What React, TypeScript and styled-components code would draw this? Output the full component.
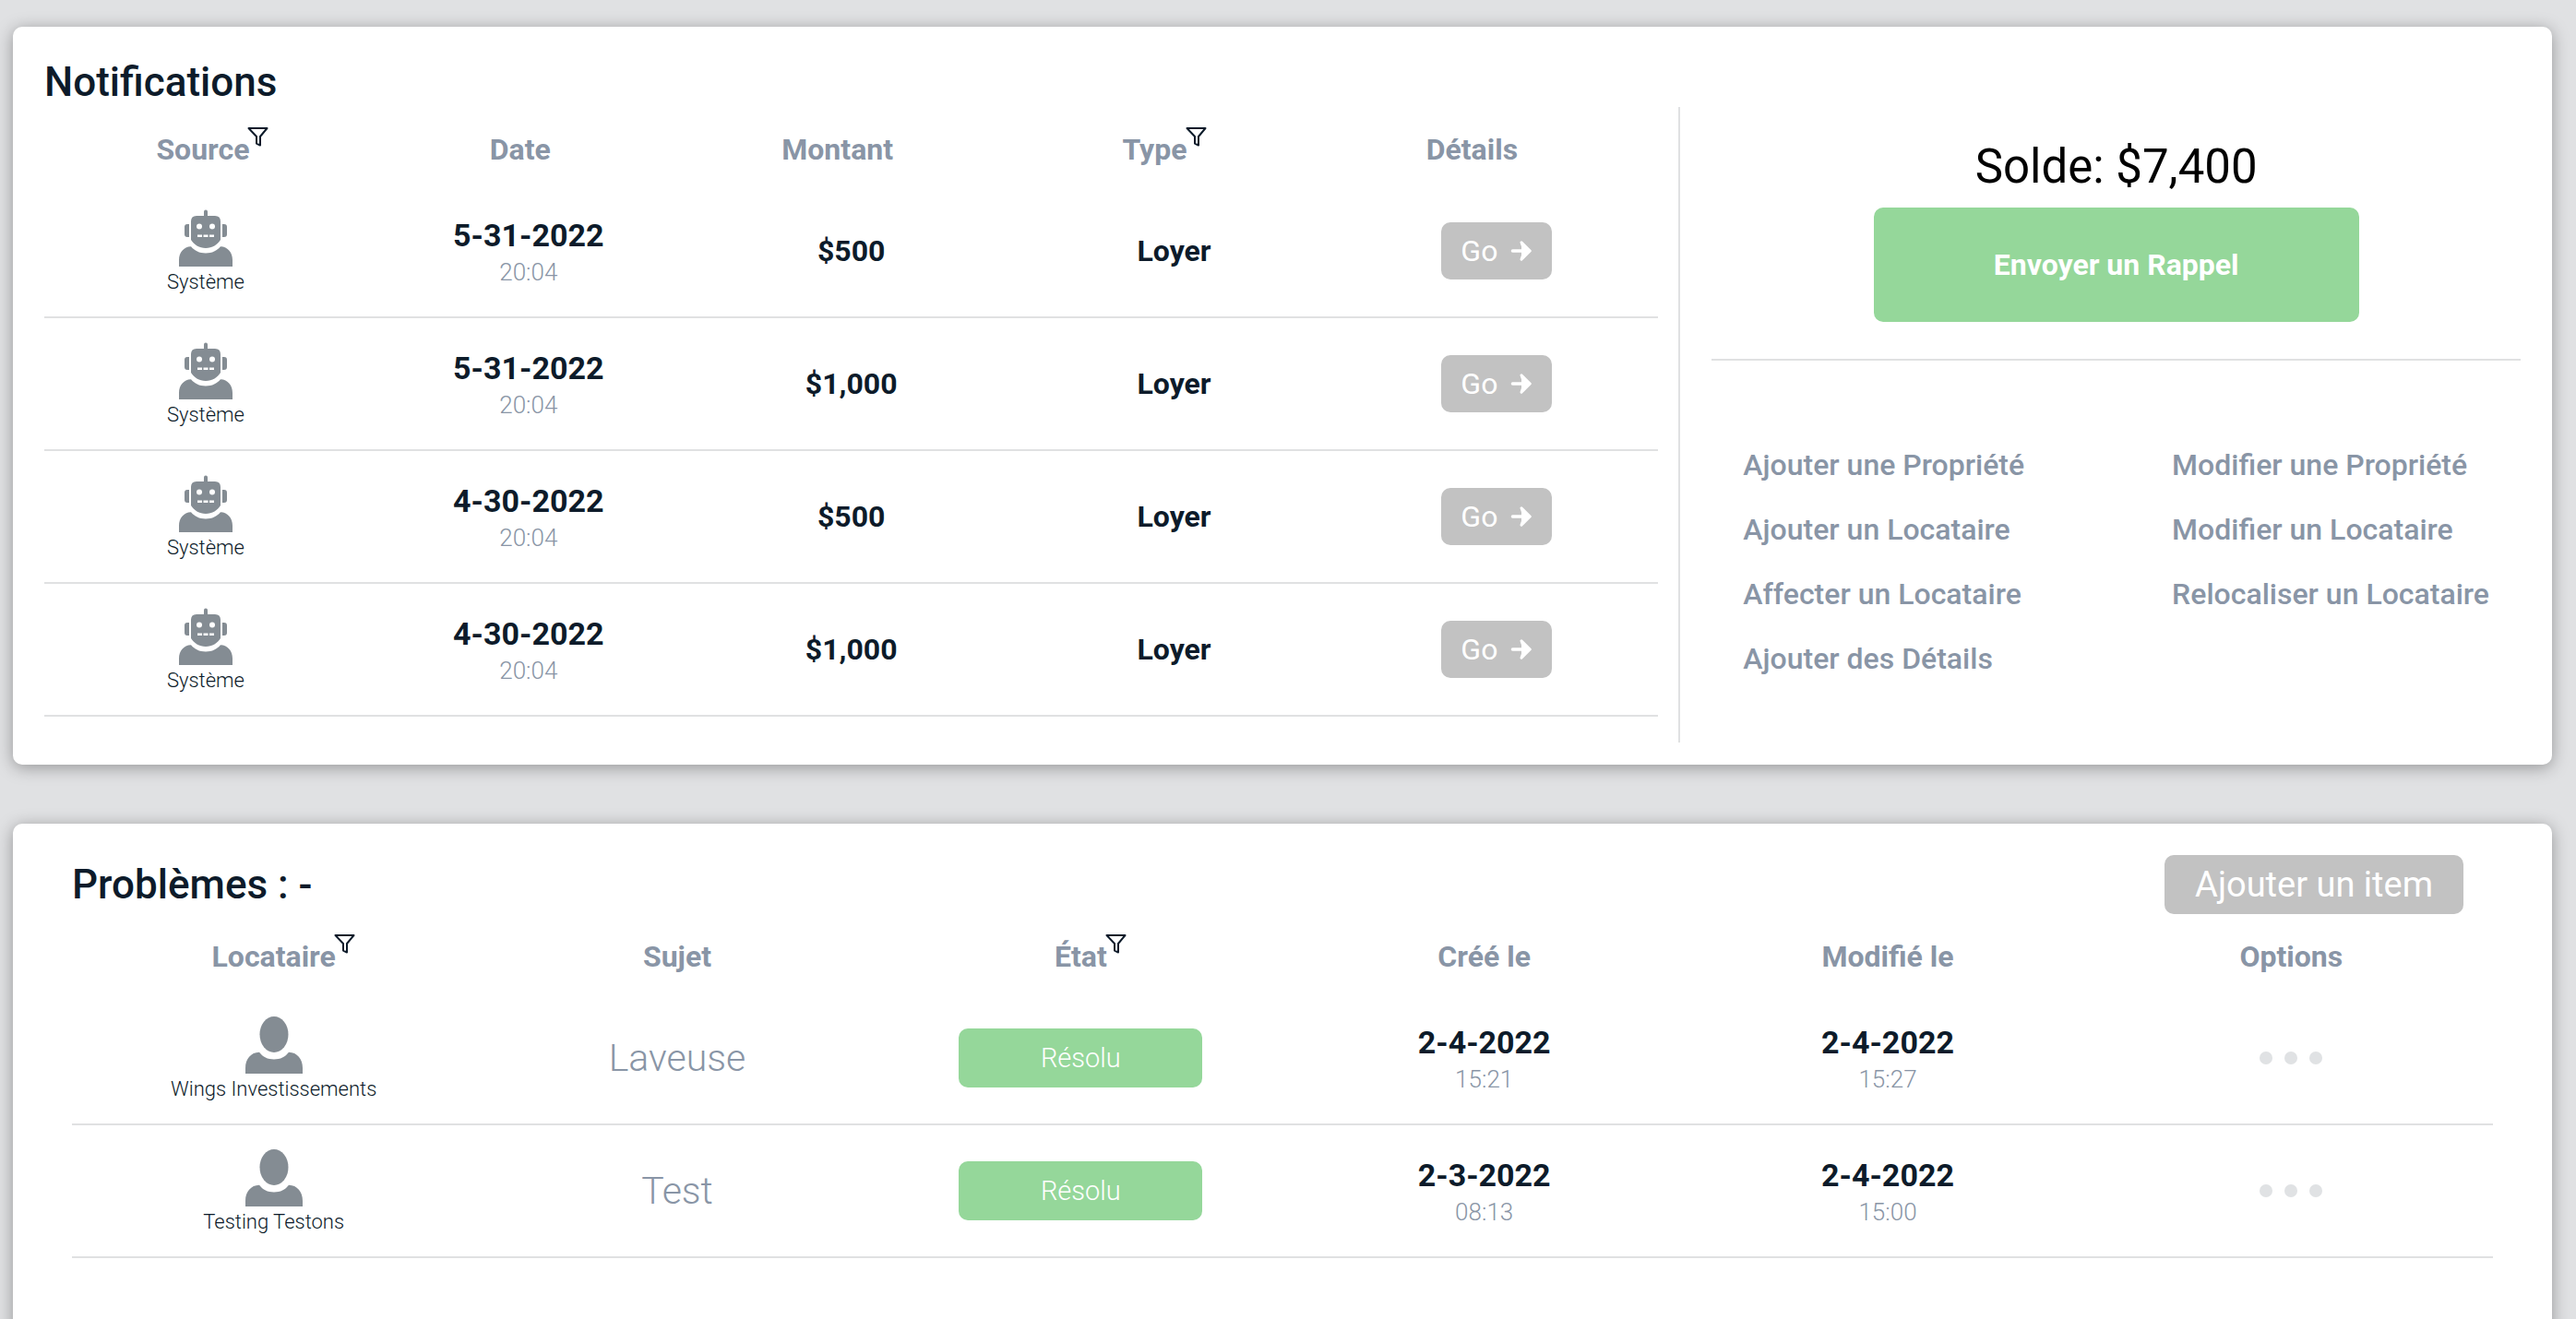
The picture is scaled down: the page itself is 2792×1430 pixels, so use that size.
import React from "react";
import styled, { createGlobalStyle } from "styled-components";

const ink = "#0d1b2a";
const slate = "#8995a6";
const line = "#e0e1e2";
const green = "#95d79a";
const grey = "#c2c2c2";

const GlobalStyle = createGlobalStyle`
  * { box-sizing: border-box; }
  html, body { margin: 0; height: 100%; }
  body {
    background: #e0e1e3;
    color: ${ink};
    font-family: Roboto, "Liberation Sans", sans-serif;
    overflow: hidden;
  }
  button { font-family: inherit; border: 0; cursor: pointer; }
`;

const Page = styled.main`
  display: flex;
  flex-direction: column;
  gap: 64px;
  padding: 29px 26px 0 14px;
`;

const Card = styled.section`
  background: #fff;
  border-radius: 10px;
  box-shadow: 0 3px 18px rgba(0, 0, 0, 0.34);
`;

const NotificationsCard = styled(Card)`
  display: grid;
  grid-template-columns: minmax(0, 23fr) minmax(0, 12fr);
  gap: 22px;
  padding: 34px 34px 24px;
`;

const NotificationsPane = styled.div`
  padding-bottom: 28px;
`;

const ProblemsCard = styled(Card)`
  min-height: 640px;
  padding: 34px 64px;
`;

const TitleBar = styled.header`
  display: flex;
  align-items: center;
  justify-content: space-between;
  height: 63px;
  padding-right: 32px;
`;

const Title = styled.h2`
  margin: 0;
  font-size: 44px;
  font-weight: 500;
  line-height: 52px;
`;

const Table = styled.table`
  display: block;
  width: 100%;
`;

const Head = styled.thead<{ $gutter?: number }>`
  display: block;
  height: 86px;
  padding-top: 28px;
  padding-right: ${(p) => p.$gutter ?? 0}px;
`;

const Body = styled.tbody`
  display: block;
`;

const HeadRow = styled.tr<{ $cols: number }>`
  display: grid;
  grid-template-columns: repeat(${(p) => p.$cols}, 1fr);
`;

const Row = styled(HeadRow)`
  height: 144px;
  align-items: center;
  border-bottom: 2px solid ${line};
`;

const HeadCell = styled.th`
  padding: 0;
  color: ${slate};
  font-size: 32px;
  font-weight: 700;
  line-height: 38px;
  text-align: center;
`;

const HeadLabel = styled.span`
  position: relative;
`;

const FilterButton = styled.button`
  position: absolute;
  left: calc(100% - 2px);
  top: -6px;
  width: 24px;
  height: 22px;
  padding: 0;
  background: none;
  color: ${ink};
  svg { display: block; }
`;

const Cell = styled.td`
  display: flex;
  flex-direction: column;
  align-items: center;
  justify-content: center;
  padding: 0;
`;

const DatedCell = styled(Cell)`
  padding-top: 6px;
`;

const Person = styled.span`
  margin-top: 6px;
  font-size: 22px;
  font-weight: 300;
  line-height: 22px;
`;

const Day = styled.span`
  font-size: 34px;
  font-weight: 700;
  line-height: 40px;
`;

const Time = styled.span`
  color: ${slate};
  font-size: 26px;
  font-weight: 300;
  line-height: 40px;
`;

const Strong = styled.span`
  font-size: 32px;
  font-weight: 700;
  line-height: 38px;
`;

const Subject = styled.span`
  color: ${slate};
  font-size: 41px;
  font-weight: 300;
  line-height: 48px;
`;

const GoButton = styled.button`
  display: flex;
  align-items: center;
  justify-content: center;
  gap: 14px;
  width: 120px;
  height: 62px;
  padding: 0;
  border-radius: 10px;
  background: ${grey};
  color: #fff;
  font-size: 32px;
`;

const StateButton = styled.button`
  width: 264px;
  height: 64px;
  border-radius: 10px;
  background: ${green};
  color: #fff;
  font-size: 29px;
  font-weight: 300;
`;

const AddButton = styled.button`
  height: 64px;
  padding: 0 33px;
  border-radius: 10px;
  background: ${grey};
  color: #fff;
  font-size: 38px;
`;

const OptionsButton = styled.button`
  display: flex;
  gap: 13px;
  padding: 10px;
  background: none;
`;

const Dot = styled.span`
  width: 14px;
  height: 14px;
  border-radius: 50%;
  background: #e0e2e4;
`;

const SidePane = styled.aside`
  margin-top: 53px;
  padding-left: 34px;
  border-left: 2px solid ${line};
`;

const Balance = styled.div`
  display: flex;
  flex-direction: column;
  align-items: center;
  gap: 14px;
  padding: 35px 0 40px;
  border-bottom: 2px solid ${line};
  color: #000;
  font-size: 51px;
  line-height: 60px;
`;

const ReminderButton = styled.button`
  width: 60%;
  height: 124px;
  border-radius: 10px;
  background: ${green};
  color: #fff;
  font-size: 32px;
  font-weight: 700;
`;

const Links = styled.nav`
  display: grid;
  grid-template-columns: max-content max-content;
  justify-content: space-between;
  row-gap: 32px;
  padding: 94px 34px 0;
`;

const Action = styled.a`
  color: ${slate};
  font-size: 32px;
  font-weight: 500;
  line-height: 38px;
  text-decoration: none;
`;

const Funnel = () => (
  <svg width="24" height="22" viewBox="0 0 24 22" fill="none" stroke="currentColor" strokeWidth="2" strokeLinejoin="round">
    <path d="M1.5 2H21.5L14 11V20.5L10 18.6V11Z" />
  </svg>
);

const RobotIcon = () => (
  <svg width="62" height="62" viewBox="0 0 62 62" fill="#848c93">
    <path d="M2 62V55C2 47 7 40.500 15 40.300C19 45 24 47.500 31 47.500S43 45 47 40.300C55 40.500 60 47 60 55V62Z" />
    <path d="M29 7V2.500Q29 .5 31 .5T33 2.500V7H41Q47 7 47 13V33C44 38 38 42 31 42S18 38 15 33V13Q15 7 21 7Z" />
    <path d="M13 16V30H11Q8 30 8 27V19Q8 16 11 16ZM49 16V30H51Q54 30 54 27V19Q54 16 51 16Z" />
    <g fill="#fff">
      <circle cx="24" cy="18.500" r="3" />
      <circle cx="38" cy="18.500" r="3" />
      <path d="M22 27.500H27V30H22ZM28.500 27.500H33.500V30H28.500ZM35 27.500H40V30H35Z" />
    </g>
  </svg>
);

const PersonIcon = () => (
  <svg width="62" height="62" viewBox="0 0 62 62" fill="#848c93">
    <path d="M0 62V56C0 46 6 39 15 38.800C19 44 24 46.500 31 46.500S43 44 47 38.800C56 39 62 46 62 56V62Z" />
    <ellipse cx="31" cy="19.500" rx="15.500" ry="19.500" />
  </svg>
);

const Arrow = () => (
  <svg width="24" height="22" viewBox="0 0 24 22" fill="#fff" stroke="#fff" strokeLinecap="round" strokeLinejoin="round">
    <path d="M2.500 11H14" strokeWidth="3.600" />
    <path d="M12 1.800L21.300 11L12 20.200L13.500 16V6Z" strokeWidth="3" />
  </svg>
);

type Column = { label: string; filter?: boolean };

const notificationColumns: Column[] = [
  { label: "Source", filter: true },
  { label: "Date" },
  { label: "Montant" },
  { label: "Type", filter: true },
  { label: "Détails" },
];

const problemColumns: Column[] = [
  { label: "Locataire", filter: true },
  { label: "Sujet" },
  { label: "État", filter: true },
  { label: "Créé le" },
  { label: "Modifié le" },
  { label: "Options" },
];

const notifications = [
  { day: "5-31-2022", time: "20:04", amount: "$500" },
  { day: "5-31-2022", time: "20:04", amount: "$1,000" },
  { day: "4-30-2022", time: "20:04", amount: "$500" },
  { day: "4-30-2022", time: "20:04", amount: "$1,000" },
];

const problems = [
  { tenant: "Wings Investissements", subject: "Laveuse", created: ["2-4-2022", "15:21"], updated: ["2-4-2022", "15:27"] },
  { tenant: "Testing Testons", subject: "Test", created: ["2-3-2022", "08:13"], updated: ["2-4-2022", "15:00"] },
];

const actions = [
  "Ajouter une Propriété",
  "Modifier une Propriété",
  "Ajouter un Locataire",
  "Modifier un Locataire",
  "Affecter un Locataire",
  "Relocaliser un Locataire",
  "Ajouter des Détails",
];

const Headings = ({ columns }: { columns: Column[] }) => (
  <HeadRow $cols={columns.length}>
    {columns.map(({ label, filter }) => (
      <HeadCell key={label} scope="col">
        <HeadLabel>
          {label}
          {filter && (
            <FilterButton type="button" aria-label={`Filtrer ${label}`}>
              <Funnel />
            </FilterButton>
          )}
        </HeadLabel>
      </HeadCell>
    ))}
  </HeadRow>
);

const DateCell = ({ day, time }: { day: string; time: string }) => (
  <DatedCell>
    <Day>{day}</Day>
    <Time>{time}</Time>
  </DatedCell>
);

export default function App() {
  return (
    <>
      <GlobalStyle />
      <Page>
        <NotificationsCard>
          <NotificationsPane>
            <Title>Notifications</Title>
            <Table>
              <Head $gutter={30}>
                <Headings columns={notificationColumns} />
              </Head>
              <Body>
                {notifications.map((n, i) => (
                  <Row key={i} $cols={5}>
                    <Cell>
                      <RobotIcon />
                      <Person>Système</Person>
                    </Cell>
                    <DateCell day={n.day} time={n.time} />
                    <Cell><Strong>{n.amount}</Strong></Cell>
                    <Cell><Strong>Loyer</Strong></Cell>
                    <Cell>
                      <GoButton type="button">Go <Arrow /></GoButton>
                    </Cell>
                  </Row>
                ))}
              </Body>
            </Table>
          </NotificationsPane>
          <SidePane>
            <Balance>
              <span>Solde: $7,400</span>
              <ReminderButton type="button">Envoyer un Rappel</ReminderButton>
            </Balance>
            <Links>
              {actions.map((a) => (
                <Action key={a} href="#">{a}</Action>
              ))}
            </Links>
          </SidePane>
        </NotificationsCard>

        <ProblemsCard>
          <TitleBar>
            <Title>Problèmes : -</Title>
            <AddButton type="button">Ajouter un item</AddButton>
          </TitleBar>
          <Table>
            <Head>
              <Headings columns={problemColumns} />
            </Head>
            <Body>
              {problems.map((p) => (
                <Row key={p.tenant} $cols={6}>
                  <Cell>
                    <PersonIcon />
                    <Person>{p.tenant}</Person>
                  </Cell>
                  <Cell><Subject>{p.subject}</Subject></Cell>
                  <Cell><StateButton type="button">Résolu</StateButton></Cell>
                  <DateCell day={p.created[0]} time={p.created[1]} />
                  <DateCell day={p.updated[0]} time={p.updated[1]} />
                  <Cell>
                    <OptionsButton type="button" aria-label="Options">
                      <Dot /><Dot /><Dot />
                    </OptionsButton>
                  </Cell>
                </Row>
              ))}
            </Body>
          </Table>
        </ProblemsCard>
      </Page>
    </>
  );
}
